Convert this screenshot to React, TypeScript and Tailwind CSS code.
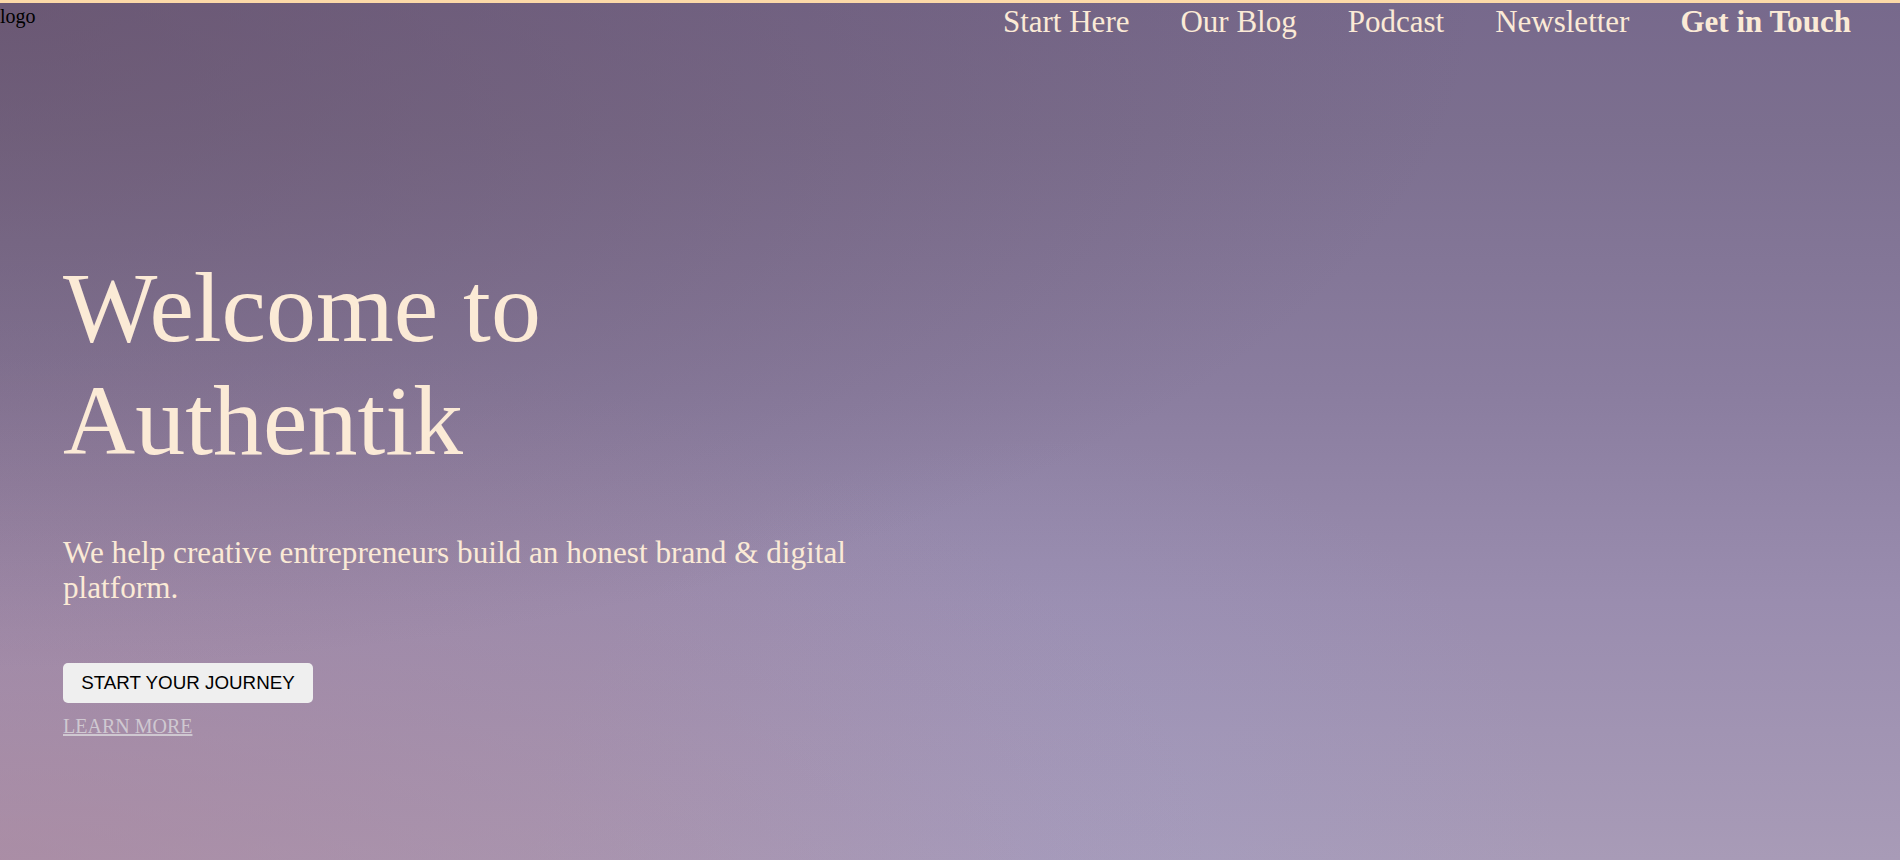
import React from "react"

const navLinks = ["Start Here", "Our Blog", "Podcast", "Newsletter"]

export default function App() {
  return (
    <div className="min-h-screen border-t-[3px] border-[#fcd9a8] font-['Liberation_Serif',serif] [background-image:radial-gradient(ellipse_at_0%_0%,rgba(96,74,96,0.55),transparent_55%),radial-gradient(ellipse_at_0%_100%,rgba(172,128,148,0.5),transparent_45%),radial-gradient(ellipse_at_55%_100%,rgba(160,158,200,0.35),transparent_35%),linear-gradient(180deg,#77698c_0%,#7c6f8f_15%,#8a7d9f_45%,#9a8daf_70%,#a89bb7_100%)]">
      {/* Header */}
      <header className="flex items-start justify-between pt-px">
        <span className="text-[20px] leading-[24px] text-black">logo</span>
        <nav>
          <ul className="flex gap-[51px] pr-[49px] text-[31px] leading-[36px] text-[#fbead6]">
            {navLinks.map((label) => (
              <li key={label}>
                <a href="#">{label}</a>
              </li>
            ))}
            <li>
              <a href="#" className="font-bold">Get in Touch</a>
            </li>
          </ul>
        </nav>
      </header>

      {/* Hero */}
      <main className="pl-[63px] pb-10">
        <div className="w-[850px] text-[#fbead6]">
          <h1 className="mt-[211px] text-[100px] leading-[113px] font-normal">Welcome to Authentik</h1>
          <p className="mt-[59px] text-[31.2px] leading-[34.5px]">
            We help creative entrepreneurs build an honest brand &amp; digital platform.
          </p>
          <button className="mt-[58px] flex h-[40px] w-[250px] items-center justify-center rounded-[5px] bg-[#efefef] font-['Liberation_Sans',Arial,sans-serif] text-[18.8px] text-black">
            START YOUR JOURNEY
          </button>
          <a href="#" className="mt-[8px] block w-fit text-[20px] text-[#cfc8d1] underline">
            LEARN MORE
          </a>
        </div>
      </main>
    </div>
  )
}
